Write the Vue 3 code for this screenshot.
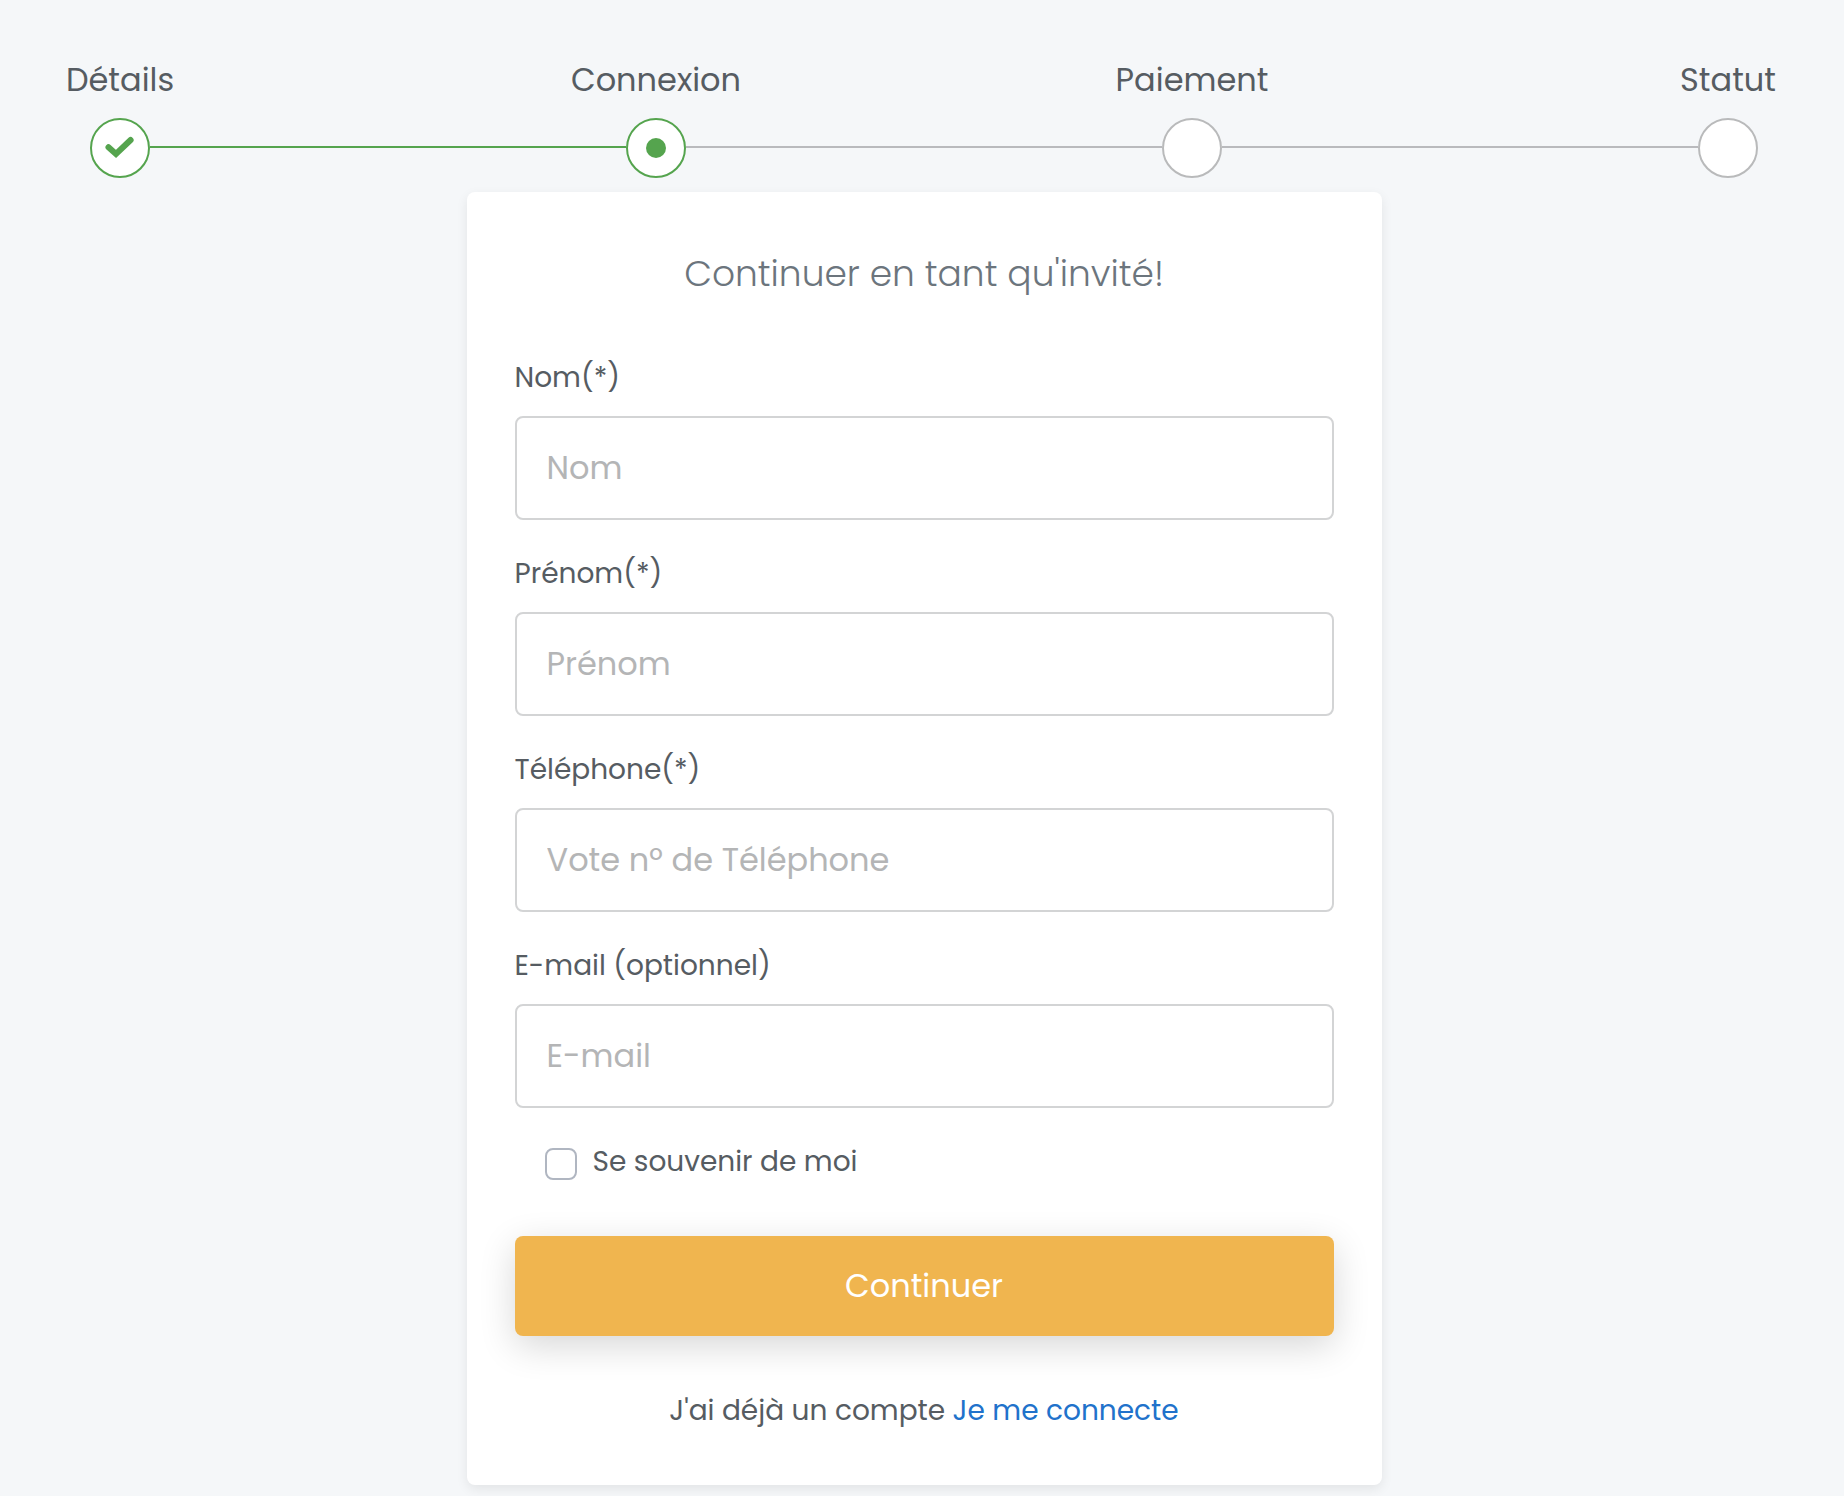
<script setup>
import { reactive, ref } from 'vue'

const steps = [
  { label: 'Détails', state: 'done' },
  { label: 'Connexion', state: 'current' },
  { label: 'Paiement', state: 'todo' },
  { label: 'Statut', state: 'todo' },
]

const fields = [
  { id: 'nom', label: 'Nom(*)', placeholder: 'Nom', type: 'text' },
  { id: 'prenom', label: 'Prénom(*)', placeholder: 'Prénom', type: 'text' },
  { id: 'telephone', label: 'Téléphone(*)', placeholder: 'Vote nº de Téléphone', type: 'tel' },
  { id: 'email', label: 'E-mail (optionnel)', placeholder: 'E-mail', type: 'email' },
]

const form = reactive({ nom: '', prenom: '', telephone: '', email: '' })
const remember = ref(false)
</script>

<template>
  <div class="page">
    <ol class="steps">
      <template v-for="(step, i) in steps" :key="step.label">
        <li
          v-if="i > 0"
          class="connector"
          :class="{ filled: steps[i - 1].state === 'done' }"
          aria-hidden="true"
        ></li>
        <li class="step" :class="step.state" :aria-current="step.state === 'current' ? 'step' : null">
          <span class="step-label">{{ step.label }}</span>
          <span class="marker">
            <svg v-if="step.state === 'done'" class="check" viewBox="0 0 30 22" aria-hidden="true">
              <path
                d="M3.500 10.200L11 17L25.600 3"
                fill="none"
                stroke="currentColor"
                stroke-width="6"
                stroke-linecap="round"
                stroke-linejoin="miter"
              />
            </svg>
            <span v-else-if="step.state === 'current'" class="dot"></span>
          </span>
        </li>
      </template>
    </ol>

    <main class="card">
      <h1 class="title">Continuer en tant qu'invité!</h1>
      <form @submit.prevent>
        <div v-for="field in fields" :key="field.id" class="field">
          <label :for="field.id">{{ field.label }}</label>
          <input
            :id="field.id"
            v-model="form[field.id]"
            :type="field.type"
            :placeholder="field.placeholder"
          />
        </div>
        <div class="remember">
          <input id="remember" v-model="remember" type="checkbox" />
          <label for="remember">Se souvenir de moi</label>
        </div>
        <button class="submit" type="submit">Continuer</button>
      </form>
      <p class="login">J'ai déjà un compte <a href="#">Je me connecte</a></p>
    </main>
  </div>
</template>

<style>
body {
  background: #f5f7f9;
}
</style>

<style scoped>
.page {
  box-sizing: border-box;
  padding: 56px 0 11px 4px;
  color: #565c62;
  font-family: Poppins, Inter, "Open Sans", sans-serif;
  font-size: 28px;
  line-height: 40px;
}

.steps {
  display: flex;
  align-items: flex-end;
  margin: 0 86px 14px;
  padding: 0;
  list-style: none;
}

.step {
  display: flex;
  flex: 0 0 60px;
  flex-direction: column;
  align-items: center;
  gap: 14px;
  width: 60px;
}

.step-label {
  font-size: 32px;
  line-height: 48px;
  white-space: nowrap;
}

.connector {
  flex: 1;
  height: 2px;
  margin-bottom: 30px;
  background: #b9babd;
}

.marker {
  display: flex;
  align-items: center;
  justify-content: center;
  box-sizing: border-box;
  width: 60px;
  height: 60px;
  border: 2px solid #b9babb;
  border-radius: 50%;
  background: #fff;
  color: #55a44e;
}

.connector.filled {
  background: #55a44e;
}

.done .marker,
.current .marker {
  border-color: #55a44e;
}

.check {
  width: 30px;
  height: 22px;
  overflow: visible;
}

.dot {
  width: 20px;
  height: 20px;
  border-radius: 50%;
  background: currentColor;
}

.card {
  box-sizing: border-box;
  width: calc(100% - 32px);
  max-width: 915px;
  margin: 0 auto;
  padding: 56px 48px 54px;
  border-radius: 8px;
  background: #fff;
  box-shadow: 0 4px 12px rgba(0, 0, 0, 0.08);
}

.title {
  margin: 0 0 58px;
  color: #6c757d;
  font-size: 36px;
  font-weight: 300;
  line-height: 52px;
  text-align: center;
}

.field {
  display: flex;
  flex-direction: column;
  gap: 18px;
  margin-bottom: 34px;
}

.field input {
  box-sizing: border-box;
  width: 100%;
  height: 104px;
  padding: 0 30px;
  border: 2px solid #d3d4d5;
  border-radius: 8px;
  background: #fff;
  color: inherit;
  font-family: inherit;
  font-size: 32px;
}

.field input::placeholder {
  color: #b4b5b6;
  opacity: 1;
}

.remember {
  display: flex;
  align-items: flex-start;
  gap: 16px;
  margin: 0 30px 54px;
}

.remember input {
  box-sizing: border-box;
  width: 32px;
  height: 32px;
  margin: 6px 0 0;
  border: 2px solid #b0b6c1;
  border-radius: 8px;
  background: #fff;
  appearance: none;
}

.remember input:checked {
  background: #55a44e;
}

.submit {
  display: block;
  width: 100%;
  height: 100px;
  padding: 0;
  border: 0;
  border-radius: 8px;
  background: #f0b54f;
  box-shadow: 0 10px 36px rgba(0, 0, 0, 0.16);
  color: #fff;
  font-family: inherit;
  font-size: 32px;
}

.login {
  margin: 55px 0 0;
  text-align: center;
}

.login a {
  color: #2172cb;
  text-decoration: none;
}
</style>
